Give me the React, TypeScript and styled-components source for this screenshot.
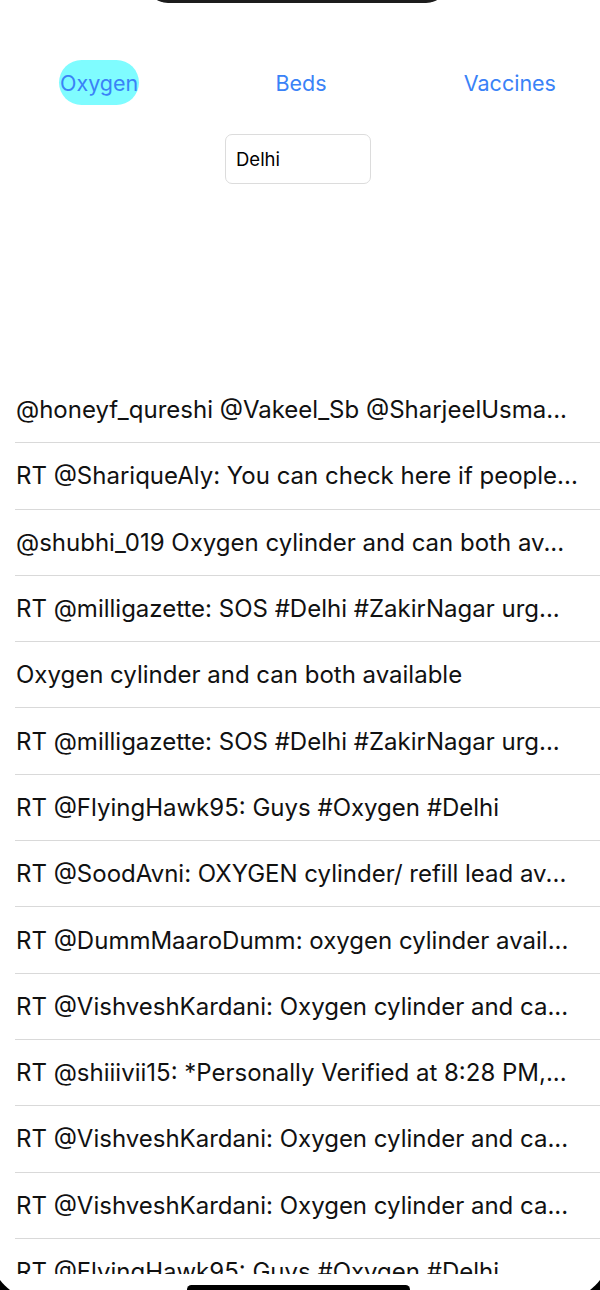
import React, { useState } from 'react';
import styled, { createGlobalStyle } from 'styled-components';

const GlobalStyle = createGlobalStyle`
  html, body {
    margin: 0;
    padding: 0;
    background: #ffffff;
  }
  * {
    box-sizing: border-box;
  }
`;

const Screen = styled.div`
  position: relative;
  width: 600px;
  height: 1290px;
  overflow: hidden;
  background: #ffffff;
  display: flex;
  flex-direction: column;
  font-family: Inter, 'Liberation Sans', Arial, sans-serif;
`;

const Notch = styled.div`
  position: absolute;
  top: -20px;
  left: 146px;
  width: 302px;
  height: 23px;
  background: #1c1c1c;
  border-radius: 0 0 22px 22px;
  z-index: 3;
`;

const CornerMask = styled.div`
  position: absolute;
  top: -80px;
  left: -10px;
  right: -10px;
  bottom: -10px;
  border-radius: 50px;
  box-shadow: 0 0 0 80px #000;
  pointer-events: none;
  z-index: 2;
`;

const HomeIndicator = styled.div`
  position: absolute;
  left: 187px;
  bottom: -4px;
  width: 223px;
  height: 9px;
  background: #000;
  border-radius: 5px;
  z-index: 3;
`;

const TabRow = styled.div`
  display: flex;
  justify-content: space-between;
  align-items: center;
  margin-top: 60px;
  padding: 0 43px 0 59px;
  height: 45px;
`;

const Tab = styled.button<{ $active: boolean }>`
  height: 45px;
  padding: 0 1px;
  border: none;
  border-radius: 23px;
  background: ${(p) => (p.$active ? '#7ffcff' : 'transparent')};
  color: #3a82f7;
  font-family: Inter, 'Liberation Sans', Arial, sans-serif;
  font-size: 21.5px;
  line-height: 47px;
  cursor: pointer;
`;

const SearchRow = styled.div`
  display: flex;
  justify-content: center;
  padding-right: 4px;
  margin-top: 29px;
`;

const CityInput = styled.input`
  width: 146px;
  height: 50px;
  border: 1px solid #dcdcdc;
  border-radius: 7px;
  padding: 0 10px;
  font-family: Inter, 'Liberation Sans', Arial, sans-serif;
  font-size: 18.5px;
  color: #000;
  outline: none;
`;

const TweetList = styled.div`
  flex: 1;
  margin-top: 193px;
  overflow: hidden;
`;

const TweetRow = styled.div`
  height: 66.3px;
  margin-left: 15px;
  padding: 0 12px 0 1px;
  display: flex;
  align-items: center;
  border-bottom: 1px solid #d9d9d9;
`;

const TweetText = styled.span`
  flex: 1;
  min-width: 0;
  font-size: 24px;
  color: #111;
  white-space: nowrap;
  overflow: hidden;
  text-overflow: ellipsis;
`;

const SafeArea = styled.div`
  height: 16px;
  flex-shrink: 0;
`;

const tabs = ['Oxygen', 'Beds', 'Vaccines'];

const tweets = [
  '@honeyf_qureshi @Vakeel_Sb @SharjeelUsma...',
  'RT @ShariqueAly: You can check here if people...',
  '@shubhi_019 Oxygen cylinder and can both av...',
  'RT @milligazette: SOS #Delhi #ZakirNagar urg...',
  'Oxygen cylinder and can both available',
  'RT @milligazette: SOS #Delhi #ZakirNagar urg...',
  'RT @FlyingHawk95: Guys #Oxygen #Delhi',
  'RT @SoodAvni: OXYGEN cylinder/ refill lead av...',
  'RT @DummMaaroDumm: oxygen cylinder avail...',
  'RT @VishveshKardani: Oxygen cylinder and ca...',
  'RT @shiiivii15: *Personally Verified at 8:28 PM,...',
  'RT @VishveshKardani: Oxygen cylinder and ca...',
  'RT @VishveshKardani: Oxygen cylinder and ca...',
  'RT @FlyingHawk95: Guys #Oxygen #Delhi',
];

const App: React.FC = () => {
  const [activeTab, setActiveTab] = useState('Oxygen');
  const [city, setCity] = useState('Delhi');

  return (
    <Screen>
      <GlobalStyle />
      <Notch />
      <TabRow>
        {tabs.map((t) => (
          <Tab key={t} $active={t === activeTab} onClick={() => setActiveTab(t)}>
            {t}
          </Tab>
        ))}
      </TabRow>
      <SearchRow>
        <CityInput value={city} onChange={(e) => setCity(e.target.value)} />
      </SearchRow>
      <TweetList>
        {tweets.map((t, i) => (
          <TweetRow key={i}>
            <TweetText>{t}</TweetText>
          </TweetRow>
        ))}
      </TweetList>
      <SafeArea />
      <CornerMask />
      <HomeIndicator />
    </Screen>
  );
};

export default App;
